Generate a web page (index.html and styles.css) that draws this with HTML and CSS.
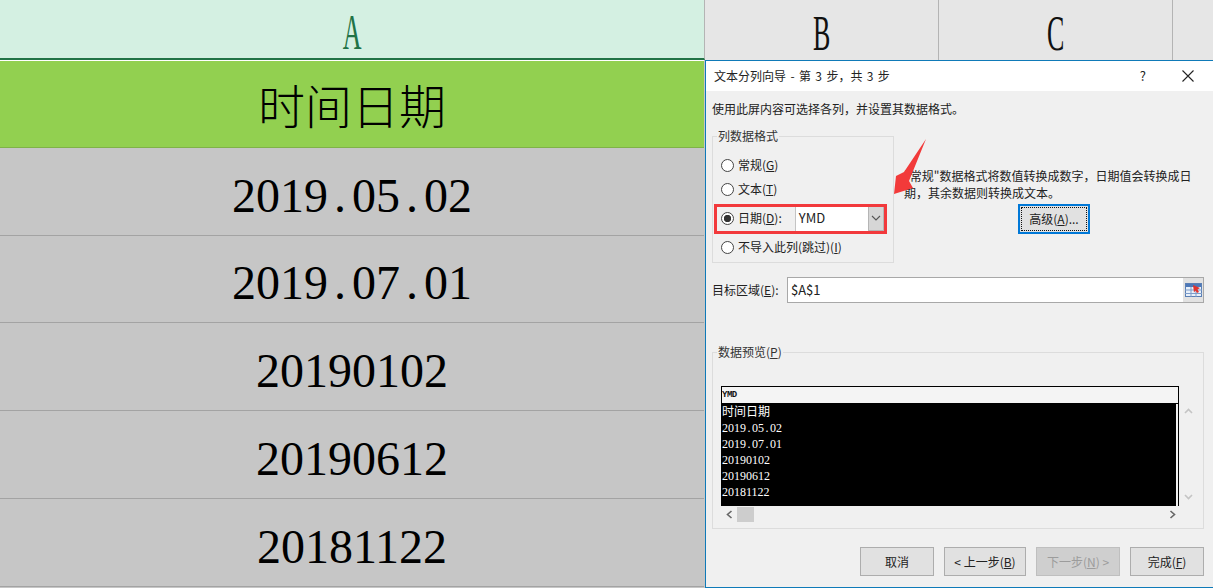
FILE: index.html
```html
<!DOCTYPE html>
<html lang="zh-CN">
<head>
    <meta charset="UTF-8">
    <title>文本分列向导</title>
    <link rel="stylesheet" href="styles.css">
</head>
<body>
    <div class="sheet">
        <div class="col-heads">
            <div class="col-head col-a"><span class="col-letter">A</span></div>
            <div class="col-head col-b"><span class="col-letter">B</span></div>
            <div class="col-head col-c"><span class="col-letter">C</span></div>
            <div class="col-head col-d"></div>
        </div>
        <div class="rows">
            <div class="row row-title">时间日期</div>
            <div class="row"><span>2019<span class="dot">.</span>05<span class="dot">.</span>02</span></div>
            <div class="row"><span>2019<span class="dot">.</span>07<span class="dot">.</span>01</span></div>
            <div class="row">20190102</div>
            <div class="row">20190612</div>
            <div class="row">20181122</div>
        </div>
    </div>

    <div class="dialog">
        <div class="titlebar">
            <span class="title">文本分列向导 - 第 3 步，共 3 步</span>
            <span class="help">?</span>
            <svg class="close" width="14" height="14" viewBox="0 0 14 14">
                <path d="M1.5 1.5L12.5 12.5M12.5 1.5L1.5 12.5" stroke="#222" stroke-width="1.1" fill="none"/>
            </svg>
        </div>
        <div class="content">
            <p class="intro">使用此屏内容可选择各列，并设置其数据格式。</p>
            <div class="format-area">
                <fieldset class="format-group">
                    <legend>列数据格式</legend>
                    <div class="radio-row"><span class="radio"></span>常规(<u>G</u>)</div>
                    <div class="radio-row"><span class="radio"></span>文本(<u>T</u>)</div>
                    <div class="radio-row date-row">
                        <span class="radio checked"></span>日期(<u>D</u>):
                        <div class="combo">
                            <span class="combo-value">YMD</span>
                            <span class="combo-btn">
                                <svg width="10" height="6" viewBox="0 0 10 6"><path d="M1 1L5 5L9 1" stroke="#555" stroke-width="1.1" fill="none"/></svg>
                            </span>
                        </div>
                    </div>
                    <div class="radio-row"><span class="radio"></span>不导入此列(跳过)(<u>I</u>)</div>
                </fieldset>
                <div class="format-help">
                    <p>"常规"数据格式将数值转换成数字，日期值会转换成日期，其余数据则转换成文本。</p>
                    <button class="btn btn-default"><span>高级(<u>A</u>)...</span></button>
                </div>
            </div>
            <div class="target-row">
                <label>目标区域(<u>E</u>):</label>
                <div class="target-input">
                    <span class="target-value">$A$1</span>
                    <span class="target-btn">
                        <svg width="17" height="14" viewBox="0 0 17 14">
                            <rect x="0.5" y="0.5" width="16" height="13" fill="#e8f0fa" stroke="#5a7fb5"/>
                            <rect x="1" y="1" width="15" height="3" fill="#4d78b8"/>
                            <path d="M0 7H17M0 10.5H17M6 4V14M11 4V14" stroke="#7d9cc9" stroke-width="1"/>
                            <path d="M8 2L15 5L12.5 6.5L14 9L12 10L10.5 7.5L9 9.5Z" fill="#e0332e"/>
                        </svg>
                    </span>
                </div>
            </div>
            <fieldset class="preview-group">
                <legend>数据预览(<u>P</u>)</legend>
                <div class="preview">
                    <div class="preview-table">
                        <div class="preview-head">YMD</div>
                        <div class="preview-body">
                            <div class="preview-line">时间日期</div>
                            <div class="preview-line">2019<span class="dot">.</span>05<span class="dot">.</span>02</div>
                            <div class="preview-line">2019<span class="dot">.</span>07<span class="dot">.</span>01</div>
                            <div class="preview-line">20190102</div>
                            <div class="preview-line">20190612</div>
                            <div class="preview-line">20181122</div>
                        </div>
                    </div>
                    <div class="vscroll">
                        <svg width="9" height="6" viewBox="0 0 9 6"><path d="M1 5L4.5 1.5L8 5" stroke="#c4c4c4" stroke-width="1.6" fill="none"/></svg>
                        <svg width="9" height="6" viewBox="0 0 9 6"><path d="M1 1L4.5 4.5L8 1" stroke="#c4c4c4" stroke-width="1.6" fill="none"/></svg>
                    </div>
                </div>
                <div class="hscroll">
                    <svg width="7" height="9" viewBox="0 0 7 9"><path d="M5.5 1L1.5 4.5L5.5 8" stroke="#666" stroke-width="1.6" fill="none"/></svg>
                    <span class="thumb"></span>
                    <svg class="arrow-right" width="7" height="9" viewBox="0 0 7 9"><path d="M1.5 1L5.5 4.5L1.5 8" stroke="#666" stroke-width="1.6" fill="none"/></svg>
                </div>
            </fieldset>
            <div class="actions">
                <button class="btn btn-cancel">取消</button>
                <button class="btn btn-back">&lt; 上一步(<u>B</u>)</button>
                <button class="btn btn-next" disabled>下一步(<u>N</u>) &gt;</button>
                <button class="btn btn-finish">完成(<u>F</u>)</button>
            </div>
        </div>
    </div>

    <div class="date-box"></div>
    <svg class="red-arrow" width="40" height="62" viewBox="0 0 40 62">
        <path d="M35 1L18 43L22 50L3 56L5 38L13 34Z" fill="#f23a3a"/>
    </svg>
</body>
</html>
```

FILE: styles.css
```css
body {
    margin: 0;
    width: 1213px;
    height: 588px;
    overflow: hidden;
    position: relative;
    background-color: #c6c6c6;
    font-family: "Liberation Serif", "Noto Sans CJK SC", serif;
}
.col-heads {
    display: flex;
    height: 60px;
    background-color: #e6e6e6;
}
.col-head {
    display: flex;
    justify-content: center;
    align-items: center;
    box-sizing: border-box;
    border-right: 1px solid #b4b4b4;
    color: #111;
}
.col-a {
    width: 705px;
    background-color: #d4f0e2;
    border-bottom: 2px solid #217346;
    color: #217346;
}
.col-b, .col-c {
    width: 234px;
}
.col-d {
    flex: 1;
    border-right: 0;
}
.col-letter {
    display: inline-block;
    font-size: 50px;
    line-height: 58px;
    padding-top: 6px;
    transform: scaleX(0.52);
}
.rows {
    display: grid;
    grid-template-rows: repeat(6, 87.8px);
    width: 704px;
}
.row {
    display: flex;
    justify-content: center;
    align-items: center;
    box-sizing: border-box;
    padding-top: 8px;
    font-size: 48px;
    color: #000;
    border-bottom: 1px solid #a3a3a3;
    background-color: #c6c6c6;
}
.row-title {
    padding-top: 0;
    font-family: "Noto Sans CJK SC", sans-serif;
    font-weight: 300;
    font-size: 47px;
    background-color: #92d050;
    border-top: 1px solid #fff;
    border-bottom-color: #7fb248;
}
.dot {
    display: inline-block;
    width: 0.5em;
    text-align: center;
}

/* dialog */
.dialog {
    position: absolute;
    left: 705px;
    top: 60px;
    width: 508px;
    height: 528px;
    box-sizing: border-box;
    border: 1px solid #0f7ab8;
    border-right: 0;
    background-color: #f0f0f0;
    font-family: "Noto Sans CJK SC", sans-serif;
    font-size: 12px;
    line-height: 16px;
    color: #222;
}
.titlebar {
    display: flex;
    align-items: center;
    height: 30px;
    padding: 0 18px 0 8px;
    background-color: #fff;
}
.title {
    flex: 1;
    word-spacing: 1.7px;
}
.help {
    margin-right: 35px;
    font-size: 13px;
}
.content {
    padding: 10px 9px 0 6px;
}
.intro {
    margin: 0 0 16px;
}
.format-area {
    display: flex;
}
fieldset {
    margin: 0;
    border: 1px solid #dcdcdc;
}
legend {
    margin-left: -4px;
    padding: 0 1px;
    color: #333;
}
.format-group {
    box-sizing: border-box;
    width: 182px;
    height: 135px;
    padding: 9px 0 0 8px;
    margin-top: -5px;
}
.radio-row {
    display: flex;
    align-items: center;
    height: 24px;
}
.date-row {
    height: 34px;
}
.radio {
    box-sizing: border-box;
    width: 13px;
    height: 13px;
    margin-right: 4px;
    border: 1px solid #444;
    border-radius: 50%;
    background-color: #fff;
}
.checked {
    background: radial-gradient(circle, #333 0, #333 3.4px, #fff 4px);
}
.combo {
    display: flex;
    box-sizing: border-box;
    width: 89px;
    height: 25px;
    margin-left: 13px;
    background-color: #fff;
    border-left: 1px solid #c4c4c4;
}
.combo-value {
    flex: 1;
    padding-left: 3px;
    line-height: 24px;
    font-size: 13px;
}
.combo-btn {
    display: flex;
    justify-content: center;
    align-items: center;
    width: 16px;
    background-color: #d6d6d6;
    border: 1px solid #b5b5b5;
    box-sizing: border-box;
}
.format-help {
    width: 290px;
    margin-left: 10px;
    padding-top: 34px;
    text-align: center;
}
.format-help p {
    margin: 0 0 3px;
    text-align: left;
    line-height: 17px;
}
.target-row {
    display: flex;
    align-items: center;
    height: 26px;
    margin-top: 14px;
}
.target-row label {
    width: 75px;
}
.target-input {
    flex: 1;
    display: flex;
    height: 26px;
    box-sizing: border-box;
    border: 1px solid #a8a8a8;
    background-color: #fff;
}
.target-value {
    flex: 1;
    padding-left: 3px;
    line-height: 24px;
    font-size: 13px;
}
.target-btn {
    display: flex;
    justify-content: center;
    align-items: center;
    width: 20px;
    background-color: #e2e2e2;
}
.preview-group {
    box-sizing: border-box;
    height: 185px;
    margin-top: 41px;
    padding: 26px 0 0 8px;
}
.preview {
    display: flex;
}
.preview-table {
    box-sizing: border-box;
    width: 458px;
    border-left: 1px solid #000;
    border-right: 1px solid #000;
}
.preview-head {
    box-sizing: border-box;
    height: 18px;
    border-top: 1px solid #000;
    border-bottom: 1px solid #000;
    background-color: #f4f4f4;
    font-family: "Liberation Mono", monospace;
    font-size: 9px;
    font-weight: bold;
    letter-spacing: -0.5px;
    line-height: 17px;
    color: #111;
}
.preview-body {
    height: 102px;
    margin: 0 2px 0 -1px;
    background-color: #000;
    color: #fff;
    font-family: "Liberation Serif", "Noto Sans CJK SC", serif;
    font-size: 12px;
}
.preview-line {
    height: 16px;
    padding-left: 1px;
}
.vscroll {
    display: flex;
    flex-direction: column;
    justify-content: space-between;
    box-sizing: border-box;
    height: 120px;
    padding: 22px 0 6px 5px;
}
.hscroll {
    display: flex;
    align-items: center;
    width: 450px;
    height: 17px;
    padding-left: 5px;
}
.thumb {
    width: 17px;
    height: 15px;
    margin-left: 4px;
    background-color: #cdcdcd;
}
.arrow-right {
    margin-left: auto;
}
.actions {
    display: flex;
    justify-content: flex-end;
    gap: 10px;
    margin-top: 18px;
}
.btn {
    box-sizing: border-box;
    height: 29px;
    padding: 0;
    border: 1px solid #adadad;
    background-color: #e1e1e1;
    font-family: "Noto Sans CJK SC", sans-serif;
    font-size: 12px;
    color: #222;
}
.btn-default {
    width: 72px;
    height: 30px;
    padding: 1px;
    border: 2px solid #0078d7;
    margin-left: 10px;
}
.btn-default span {
    display: block;
    line-height: 22px;
    border: 1px dotted #111;
}
.btn-cancel, .btn-finish {
    width: 74px;
}
.btn-back {
    width: 82px;
}
.btn-next {
    width: 84px;
    background-color: #cfcfcf;
    border-color: #bfbfbf;
    color: #9c9c9c;
}

/* annotations */
.date-box {
    position: absolute;
    left: 714px;
    top: 204px;
    width: 167px;
    height: 24px;
    border: 3px solid #f2393c;
}
.red-arrow {
    position: absolute;
    left: 891px;
    top: 138px;
}
```
